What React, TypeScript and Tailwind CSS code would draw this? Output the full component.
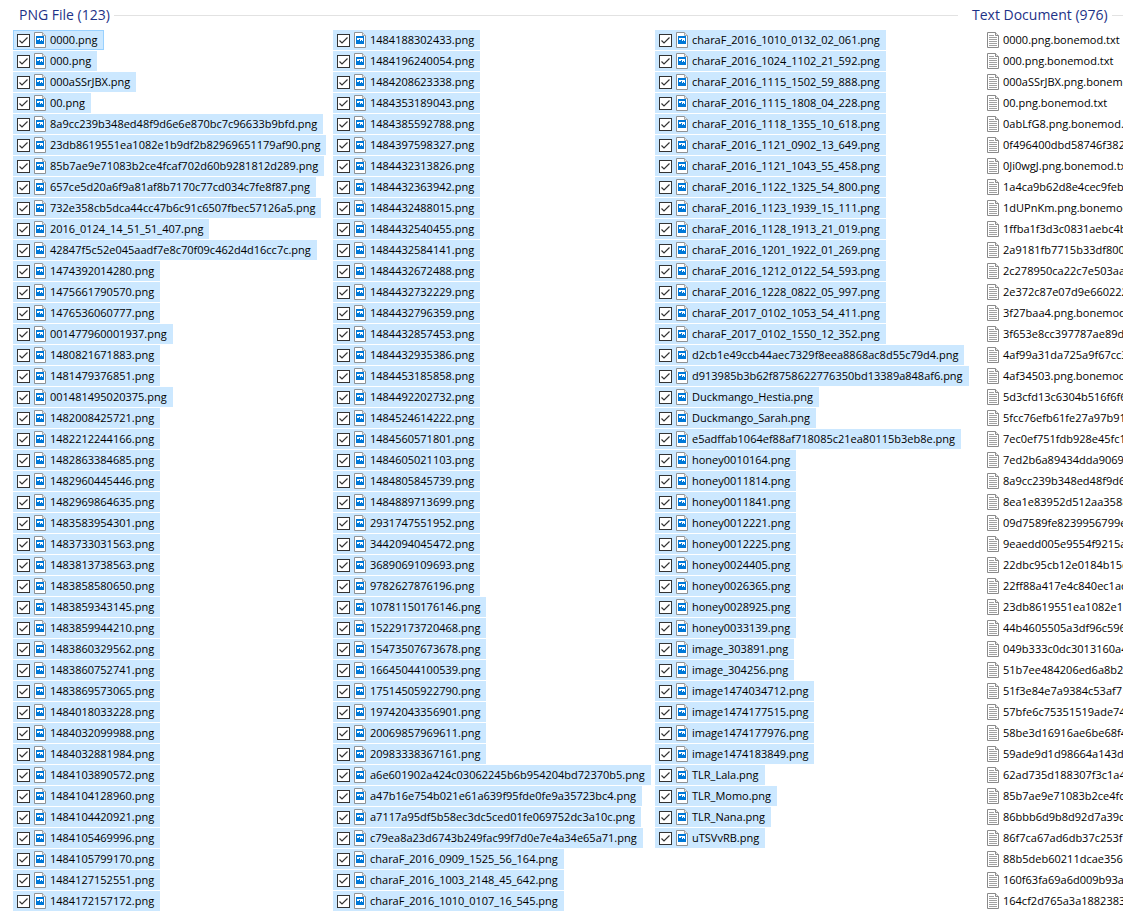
import React from "react";

const pngColumns = [
  {
    width: "w-[320px]",
    files: [
      "0000.png",
      "000.png",
      "000aSSrJBX.png",
      "00.png",
      "8a9cc239b348ed48f9d6e6e870bc7c96633b9bfd.png",
      "23db8619551ea1082e1b9df2b82969651179af90.png",
      "85b7ae9e71083b2ce4fcaf702d60b9281812d289.png",
      "657ce5d20a6f9a81af8b7170c77cd034c7fe8f87.png",
      "732e358cb5dca44cc47b6c91c6507fbec57126a5.png",
      "2016_0124_14_51_51_407.png",
      "42847f5c52e045aadf7e8c70f09c462d4d16cc7c.png",
      "1474392014280.png",
      "1475661790570.png",
      "1476536060777.png",
      "001477960001937.png",
      "1480821671883.png",
      "1481479376851.png",
      "001481495020375.png",
      "1482008425721.png",
      "1482212244166.png",
      "1482863384685.png",
      "1482960445446.png",
      "1482969864635.png",
      "1483583954301.png",
      "1483733031563.png",
      "1483813738563.png",
      "1483858580650.png",
      "1483859343145.png",
      "1483859944210.png",
      "1483860329562.png",
      "1483860752741.png",
      "1483869573065.png",
      "1484018033228.png",
      "1484032099988.png",
      "1484032881984.png",
      "1484103890572.png",
      "1484104128960.png",
      "1484104420921.png",
      "1484105469996.png",
      "1484105799170.png",
      "1484127152551.png",
      "1484172157172.png",
    ],
  },
  {
    width: "w-[322px]",
    files: [
      "1484188302433.png",
      "1484196240054.png",
      "1484208623338.png",
      "1484353189043.png",
      "1484385592788.png",
      "1484397598327.png",
      "1484432313826.png",
      "1484432363942.png",
      "1484432488015.png",
      "1484432540455.png",
      "1484432584141.png",
      "1484432672488.png",
      "1484432732229.png",
      "1484432796359.png",
      "1484432857453.png",
      "1484432935386.png",
      "1484453185858.png",
      "1484492202732.png",
      "1484524614222.png",
      "1484560571801.png",
      "1484605021103.png",
      "1484805845739.png",
      "1484889713699.png",
      "2931747551952.png",
      "3442094045472.png",
      "3689069109693.png",
      "9782627876196.png",
      "10781150176146.png",
      "15229173720468.png",
      "15473507673678.png",
      "16645044100539.png",
      "17514505922790.png",
      "19742043356901.png",
      "20069857969611.png",
      "20983338367161.png",
      "a6e601902a424c03062245b6b954204bd72370b5.png",
      "a47b16e754b021e61a639f95fde0fe9a35723bc4.png",
      "a7117a95df5b58ec3dc5ced01fe069752dc3a10c.png",
      "c79ea8a23d6743b249fac99f7d0e7e4a34e65a71.png",
      "charaF_2016_0909_1525_56_164.png",
      "charaF_2016_1003_2148_45_642.png",
      "charaF_2016_1010_0107_16_545.png",
    ],
  },
  {
    width: "w-[311px]",
    files: [
      "charaF_2016_1010_0132_02_061.png",
      "charaF_2016_1024_1102_21_592.png",
      "charaF_2016_1115_1502_59_888.png",
      "charaF_2016_1115_1808_04_228.png",
      "charaF_2016_1118_1355_10_618.png",
      "charaF_2016_1121_0902_13_649.png",
      "charaF_2016_1121_1043_55_458.png",
      "charaF_2016_1122_1325_54_800.png",
      "charaF_2016_1123_1939_15_111.png",
      "charaF_2016_1128_1913_21_019.png",
      "charaF_2016_1201_1922_01_269.png",
      "charaF_2016_1212_0122_54_593.png",
      "charaF_2016_1228_0822_05_997.png",
      "charaF_2017_0102_1053_54_411.png",
      "charaF_2017_0102_1550_12_352.png",
      "d2cb1e49ccb44aec7329f8eea8868ac8d55c79d4.png",
      "d913985b3b62f8758622776350bd13389a848af6.png",
      "Duckmango_Hestia.png",
      "Duckmango_Sarah.png",
      "e5adffab1064ef88af718085c21ea80115b3eb8e.png",
      "honey0010164.png",
      "honey0011814.png",
      "honey0011841.png",
      "honey0012221.png",
      "honey0012225.png",
      "honey0024405.png",
      "honey0026365.png",
      "honey0028925.png",
      "honey0033139.png",
      "image_303891.png",
      "image_304256.png",
      "image1474034712.png",
      "image1474177515.png",
      "image1474177976.png",
      "image1474183849.png",
      "TLR_Lala.png",
      "TLR_Momo.png",
      "TLR_Nana.png",
      "uTSVvRB.png",
    ],
  },
];

const textFiles = [
  "0000.png.bonemod.txt",
  "000.png.bonemod.txt",
  "000aSSrJBX.png.bonemod.txt",
  "00.png.bonemod.txt",
  "0abLfG8.png.bonemod.txt",
  "0f496400dbd58746f382",
  "0Ji0wgJ.png.bonemod.txt",
  "1a4ca9b62d8e4cec9feb",
  "1dUPnKm.png.bonemod.txt",
  "1ffba1f3d3c0831aebc4b",
  "2a9181fb7715b33df8009",
  "2c278950ca22c7e503aa",
  "2e372c87e07d9e660222",
  "3f27baa4.png.bonemod.txt",
  "3f653e8cc397787ae89d",
  "4af99a31da725a9f67cc3",
  "4af34503.png.bonemod.txt",
  "5d3cfd13c6304b516f6f6",
  "5fcc76efb61fe27a97b91",
  "7ec0ef751fdb928e45fc1",
  "7ed2b6a89434dda90698",
  "8a9cc239b348ed48f9d6e6e870bc7c96633b9bfd.png.bonemod.txt",
  "8ea1e83952d512aa3588",
  "09d7589fe8239956799e",
  "9eaedd005e9554f9215a",
  "22dbc95cb12e0184b15c",
  "22ff88a417e4c840ec1ac",
  "23db8619551ea1082e1b9df2b82969651179af90.png.bonemod.txt",
  "44b4605505a3df96c596",
  "049b333c0dc3013160a4",
  "51b7ee484206ed6a8b24",
  "51f3e84e7a9384c53af71",
  "57bfe6c75351519ade74",
  "58be3d16916ae6be68f4",
  "59ade9d1d98664a143dc",
  "62ad735d188307f3c1a4",
  "85b7ae9e71083b2ce4fcaf702d60b9281812d289.png.bonemod.txt",
  "86bbb6d9b8d92d7a39c",
  "86f7ca67ad6db37c253f",
  "88b5deb60211dcae3566",
  "160f63fa69a6d009b93ac",
  "164cf2d765a3a1882383",
];

const PngIcon = () => (
  <svg className="h-4 w-3 shrink-0" viewBox="0 0 12 16" aria-hidden="true">
    <path d="M.5.5h8l3 3v12H.5z" fill="#fff" stroke="#8e9295" />
    <path d="M8.5.5v3h3" fill="#e8e8e8" stroke="#a5a8aa" />
    <g shapeRendering="crispEdges">
      <path d="M2 4h8v8H2z" fill="#0078d7" />
      <path d="M3 6h6v3H8V8H7v1H6V7H5v1H3z" fill="#fff" />
    </g>
  </svg>
);

const TextIcon = () => (
  <svg className="h-4 w-3 shrink-0" viewBox="0 0 12 16" aria-hidden="true">
    <path d="M.5.5h8l3 3v12H.5z" fill="#fff" stroke="#8a8a8a" />
    <path d="M8.5.5v3h3" fill="#e8e8e8" stroke="#8a8a8a" />
    <path d="M2 3.5h5M2 5.5h8M2 7.5h8M2 9.5h8M2 11.5h8M2 13.5h8" stroke="#a0a0a0" />
  </svg>
);

const GroupTitle = ({ children }: { children: React.ReactNode }) => (
  <div className="flex h-[30px] items-center gap-1 pl-1.5">
    <h2 className="pb-px text-[14px] leading-5 whitespace-nowrap text-[#1e3287]">{children}</h2>
    <div className="h-px flex-1 bg-[#e2e2e2]" />
  </div>
);

const PngFile = ({ name, focused }: { name: string; focused: boolean }) => (
  <li>
    <label
      className={`flex h-5 w-fit items-center gap-1 border pr-[5px] pl-[3px] whitespace-nowrap ${
        focused ? "border-[#99d1ff] bg-[#cce8ff]" : "border-[#cce8ff] bg-[#cce8ff]"
      }`}
    >
      <span className="relative flex size-[13px] shrink-0">
        <input
          type="checkbox"
          defaultChecked
          className="peer size-[13px] appearance-none border border-[#333] bg-white"
        />
        <svg
          className="pointer-events-none absolute inset-0 hidden peer-checked:block"
          viewBox="0 0 13 13"
          aria-hidden="true"
        >
          <path d="M2.5 6.5l2.5 2.5 5.5-5.5" fill="none" stroke="#333" strokeWidth="1.2" />
        </svg>
      </span>
      <PngIcon />
      <span>{name}</span>
    </label>
  </li>
);

const App = () => {
  return (
    <main className="flex min-h-screen overflow-hidden bg-white pl-[13px] font-['Open_Sans','Noto_Sans',sans-serif] text-[11px] leading-4 text-black">
      {/* PNG files, all selected */}
      <section className="shrink-0">
        <div className="pr-2">
          <GroupTitle>PNG File (123)</GroupTitle>
        </div>
        <div className="flex">
          {pngColumns.map((column, index) => (
            <ul key={index} className={`flex shrink-0 flex-col gap-px ${column.width}`}>
              {column.files.map((name) => (
                <PngFile key={name} name={name} focused={name === "0000.png"} />
              ))}
            </ul>
          ))}
        </div>
      </section>

      {/* Text documents */}
      <section className="min-w-0 flex-1">
        <GroupTitle>Text Document (976)</GroupTitle>
        <ul className="flex flex-col gap-px">
          {textFiles.map((name) => (
            <li key={name} className="flex h-5 items-center gap-1 pl-[21px] whitespace-nowrap">
              <TextIcon />
              <span>{name}</span>
            </li>
          ))}
        </ul>
      </section>
    </main>
  );
};

export default App;
